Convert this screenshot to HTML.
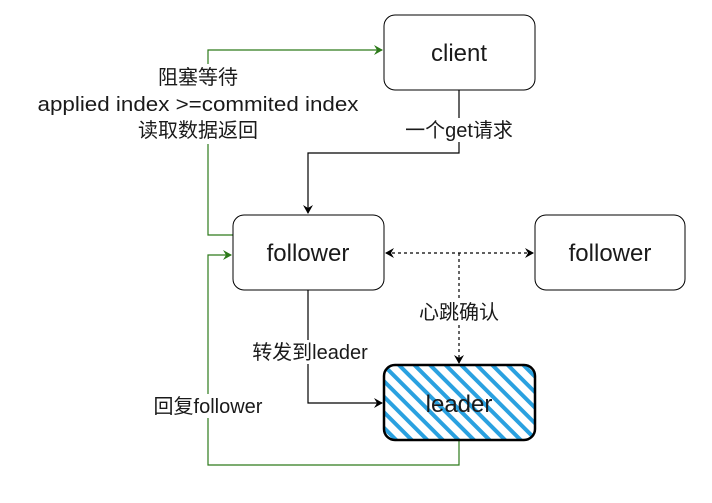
<!DOCTYPE html>
<html><head><meta charset="utf-8"><style>
html,body{margin:0;padding:0;background:#fff;}
svg{display:block;}
text{font-family:"Liberation Sans","Noto Sans CJK SC",sans-serif;fill:#1a1a1a;}
</style></head><body>
<svg width="712" height="503" viewBox="0 0 712 503" xmlns="http://www.w3.org/2000/svg">
<defs>
<pattern id="h" patternUnits="userSpaceOnUse" width="11" height="11" patternTransform="rotate(-45)">
<rect width="11" height="11" fill="#fff"/>
<rect x="0" y="0" width="4" height="11" fill="#2aa1e0"/>
</pattern>
<marker id="ab" markerWidth="10" markerHeight="10" refX="8" refY="5" orient="auto" markerUnits="userSpaceOnUse"><path d="M0,0 L9,5 L0,10 L3,5z" fill="#000"/></marker>
<marker id="ag" markerWidth="10" markerHeight="10" refX="8" refY="5" orient="auto" markerUnits="userSpaceOnUse"><path d="M0,0 L9,5 L0,10 L3,5z" fill="#2d7a1a"/></marker>
<marker id="as" markerWidth="10" markerHeight="10" refX="2" refY="5" orient="auto" markerUnits="userSpaceOnUse"><path d="M10,0 L1,5 L10,10 L7,5z" fill="#000"/></marker>
</defs>
<g fill="none" stroke="#2d7a1a" stroke-width="1.2">
<path d="M233,235 H208 V50 H382" marker-end="url(#ag)"/>
<path d="M459,440 V465 H208 V255 H231" marker-end="url(#ag)"/>
</g>
<rect x="34" y="64" width="330" height="80" fill="#fff"/>
<g fill="none" stroke="#000" stroke-width="1.2">
<path d="M459,90 V153 H308 V213" marker-end="url(#ab)"/>
<path d="M308,290 V403 H382" marker-end="url(#ab)"/>
<path d="M386,253 H533" stroke-dasharray="3,3" marker-start="url(#as)" marker-end="url(#ab)"/>
<path d="M459,253 V363" stroke-dasharray="3,3" marker-end="url(#ab)"/>
</g>
<rect x="384" y="15" width="151" height="75" rx="11" fill="#fff" stroke="#000" stroke-width="1"/>
<rect x="233" y="215" width="151" height="75" rx="11" fill="#fff" stroke="#000" stroke-width="1"/>
<rect x="535" y="215" width="150" height="75" rx="11" fill="#fff" stroke="#000" stroke-width="1"/>
<rect x="384" y="365" width="151" height="75" rx="11" fill="url(#h)" stroke="#000" stroke-width="2.5"/>
<g font-size="24" text-anchor="middle">
<text x="459" y="61">client</text>
<text x="308" y="261">follower</text>
<text x="610" y="261">follower</text>
<text x="459" y="412">leader</text>
</g>
<g font-size="20" text-anchor="middle">
<rect x="398" y="118" width="124" height="24" fill="#fff"/>
<text x="459" y="137">一个get请求</text>
<text x="198" y="84">阻塞等待</text>
<text x="198" y="111" textLength="321" lengthAdjust="spacingAndGlyphs">applied index &gt;=commited index</text>
<text x="198" y="137">读取数据返回</text>
<rect x="410" y="300" width="98" height="24" fill="#fff"/>
<text x="459" y="319">心跳确认</text>
<rect x="242" y="340" width="134" height="24" fill="#fff"/>
<text x="310" y="359">转发到leader</text>
<rect x="143" y="394" width="130" height="24" fill="#fff"/>
<text x="208" y="413">回复follower</text>
</g>
</svg>
</body></html>
